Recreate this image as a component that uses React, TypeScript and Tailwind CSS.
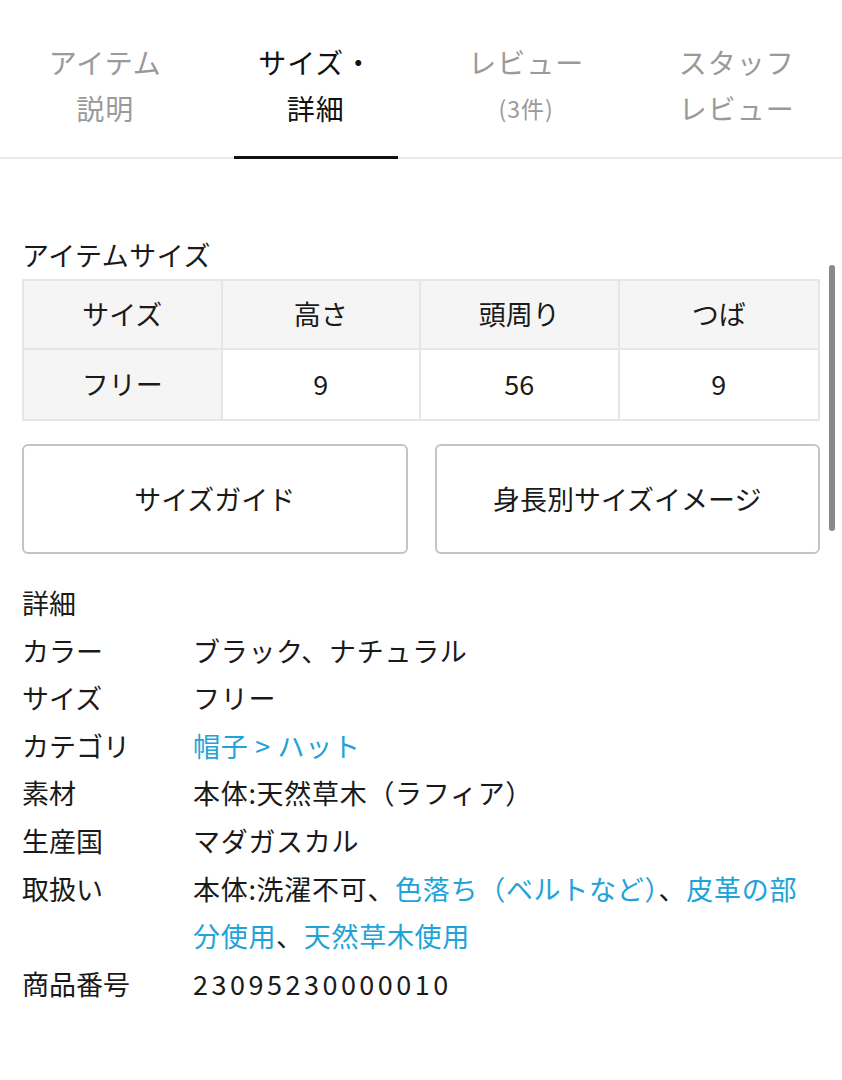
import React from "react";

const font = { fontFamily: '"Noto Sans CJK JP", "Noto Sans", sans-serif' };

function Tab({ l1, l2, active, small }: { l1: string; l2: string; active?: boolean; small?: boolean }) {
  return (
    <div className="relative flex flex-col items-center pt-[39px] pb-[26px]">
      <div className={`text-[28px] leading-[46px] tracking-[1px] ${active ? "text-[#111]" : "text-[#9a9a9a]"}`}>{l1}</div>
      <div className={`${small ? "text-[23px]" : "text-[28px]"} leading-[46px] tracking-[1px] ${active ? "text-[#111]" : "text-[#9a9a9a]"}`}>{l2}</div>
      {active && <div className="absolute bottom-[-2px] left-[11%] right-[11%] h-[3px] bg-[#111]" />}
    </div>
  );
}

function Row({ label, children }: { label: string; children: React.ReactNode }) {
  return (
    <div className="flex">
      <div className="w-[171px] shrink-0">{label}</div>
      <div className="flex-1 tracking-[0.7px]">{children}</div>
    </div>
  );
}

export default function App() {
  const link = "text-[#22a3d8]";
  return (
    <div className="relative w-[842px] h-[1080px] bg-white text-[#1a1a1a]" style={font}>
      <div className="grid grid-cols-4 border-b-2 border-[#e8e8e8]">
        <Tab l1="アイテム" l2="説明" />
        <Tab l1="サイズ・" l2="詳細" active />
        <Tab l1="レビュー" l2="(3件)" small />
        <Tab l1="スタッフ" l2="レビュー" />
      </div>

      <div className="px-[22px] pt-[78px]">
        <div className="text-[27px] leading-[36px] mb-[6px] tracking-[0.5px]">アイテムサイズ</div>
        <div className="grid grid-cols-4 border-2 border-[#e6e6e6] w-[798px] text-[27px]">
          {["サイズ", "高さ", "頭周り", "つば"].map((t, i) => (
            <div key={t} className={`h-[69px] flex items-center justify-center bg-[#f5f5f5] border-b-2 border-[#e6e6e6] ${i < 3 ? "border-r-2" : ""}`}>{t}</div>
          ))}
          {["フリー", "9", "56", "9"].map((t, i) => (
            <div key={i} className={`h-[69px] flex items-center justify-center border-[#e6e6e6] ${i === 0 ? "bg-[#f5f5f5]" : "bg-white"} ${i < 3 ? "border-r-2" : ""}`}>{t}</div>
          ))}
        </div>

        <div className="flex gap-[27px] mt-[23px] w-[798px]">
          <button className="flex-1 h-[110px] border-2 border-[#c4c4c4] rounded-[6px] text-[27px] text-[#1a1a1a]">サイズガイド</button>
          <button className="flex-1 h-[110px] border-2 border-[#c4c4c4] rounded-[6px] text-[27px] text-[#1a1a1a]">身長別サイズイメージ</button>
        </div>

        <div className="mt-[25px] text-[27px] leading-[47.6px] w-[800px]">
          <div>詳細</div>
          <Row label="カラー">ブラック、ナチュラル</Row>
          <Row label="サイズ">フリー</Row>
          <Row label="カテゴリ"><span className={link}>帽子 &gt; ハット</span></Row>
          <Row label="素材">本体:天然草木（ラフィア）</Row>
          <Row label="生産国">マダガスカル</Row>
          <Row label="取扱い">
            本体:洗濯不可、<span className={link}>色落ち（ベルトなど）</span>、<span className={link}>皮革の部<br />分使用</span>、<span className={link}>天然草木使用</span>
          </Row>
          <Row label="商品番号"><span className="tracking-[3.5px]">23095230000010</span></Row>
        </div>
      </div>

      <div className="absolute left-[829px] top-[265px] w-[6px] h-[266px] rounded-full bg-[#8a8a8a]" />
    </div>
  );
}
